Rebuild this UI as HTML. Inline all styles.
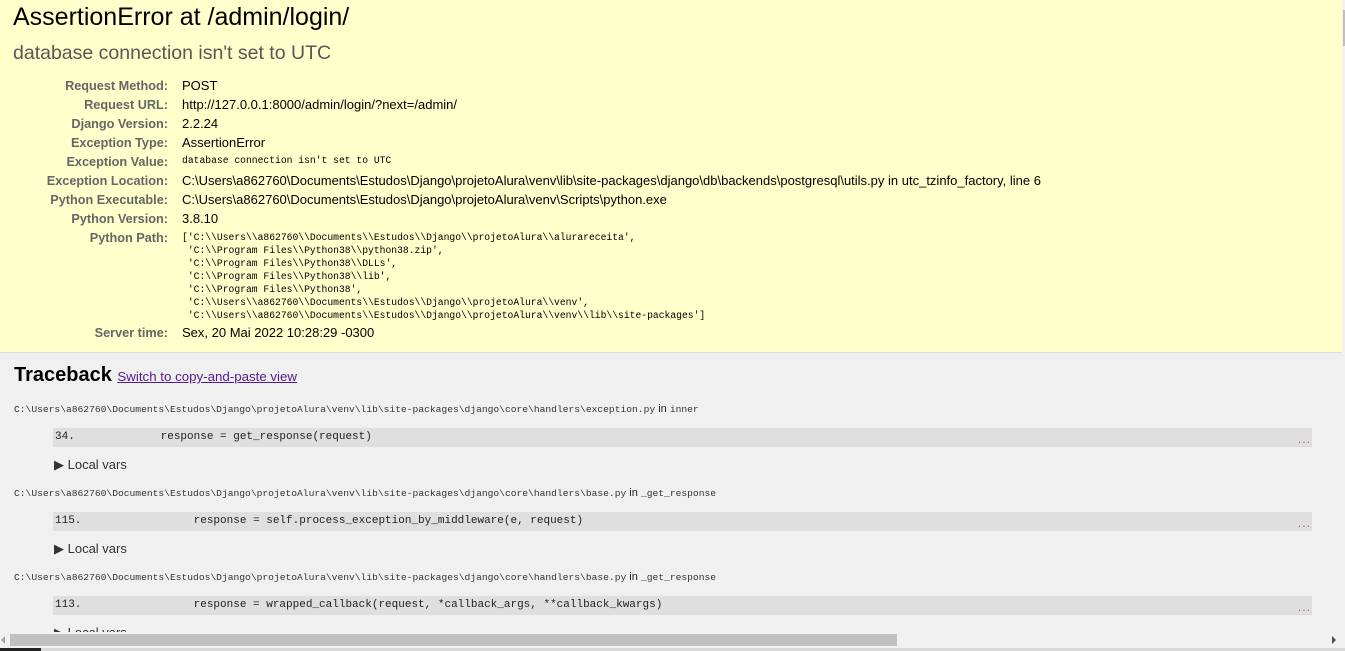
<!DOCTYPE html>
<html><head><meta charset="utf-8"><style>
*{margin:0;padding:0;box-sizing:border-box}
body{width:1345px;height:651px;overflow:hidden;position:relative;background:#f0f0f0;font-family:"Liberation Sans",Arial,sans-serif;color:#000}
#summary{position:absolute;left:0;top:0;width:1342px;height:353px;background:#ffffcc;border-bottom:1px solid #ddd}
.a{position:absolute;white-space:pre}
h1{position:absolute;left:13px;top:3px;font-size:25px;font-weight:normal;white-space:nowrap}
h2.sub{position:absolute;left:13px;top:42px;font-size:19.5px;font-weight:normal;color:#575757;white-space:nowrap}
.lab{position:absolute;right:1174px;font-size:12.7px;font-weight:bold;color:#666;white-space:nowrap;text-align:right;margin-top:1px}
.val{position:absolute;left:182px;font-size:13px;white-space:nowrap}
.mono{font-family:"Liberation Mono",monospace;font-size:9.7px}
.fn{position:absolute;left:14px;font-size:11px;color:#222;white-space:nowrap}
.fn .m{font-family:"Liberation Mono",monospace;font-size:9.65px;color:#333}
.code{position:absolute;left:53px;width:1259px;height:19px;background:#dfdfdf;font-family:"Liberation Mono",monospace;font-size:11px;color:#222;line-height:19px;white-space:pre;padding-left:2px}
.code .d{position:absolute;right:2px;top:4px;color:#a55;font-size:9px;letter-spacing:-1px}
.lv{position:absolute;left:54px;font-size:13px;color:#333;white-space:nowrap}
</style></head><body>
<div id="summary">
<h1>AssertionError at /admin/login/</h1>
<h2 class="sub">database connection isn't set to UTC</h2>
<div class="lab" style="top:78px">Request Method:</div><div class="val" style="top:78px">POST</div>
<div class="lab" style="top:97px">Request URL:</div><div class="val" style="top:97px">http://127.0.0.1:8000/admin/login/?next=/admin/</div>
<div class="lab" style="top:116px">Django Version:</div><div class="val" style="top:116px">2.2.24</div>
<div class="lab" style="top:135px">Exception Type:</div><div class="val" style="top:135px">AssertionError</div>
<div class="lab" style="top:154px">Exception Value:</div><div class="val mono" style="top:155px">database connection isn't set to UTC</div>
<div class="lab" style="top:173px">Exception Location:</div><div class="val" style="top:173px">C:\Users\a862760\Documents\Estudos\Django\projetoAlura\venv\lib\site-packages\django\db\backends\postgresql\utils.py in utc_tzinfo_factory, line 6</div>
<div class="lab" style="top:192px">Python Executable:</div><div class="val" style="top:192px">C:\Users\a862760\Documents\Estudos\Django\projetoAlura\venv\Scripts\python.exe</div>
<div class="lab" style="top:211px">Python Version:</div><div class="val" style="top:211px">3.8.10</div>
<div class="lab" style="top:230px">Python Path:</div>
<div class="val mono" style="top:231px;line-height:13px;white-space:pre">['C:\\Users\\a862760\\Documents\\Estudos\\Django\\projetoAlura\\alurareceita',
 'C:\\Program Files\\Python38\\python38.zip',
 'C:\\Program Files\\Python38\\DLLs',
 'C:\\Program Files\\Python38\\lib',
 'C:\\Program Files\\Python38',
 'C:\\Users\\a862760\\Documents\\Estudos\\Django\\projetoAlura\\venv',
 'C:\\Users\\a862760\\Documents\\Estudos\\Django\\projetoAlura\\venv\\lib\\site-packages']</div>
<div class="lab" style="top:325px">Server time:</div><div class="val" style="top:325px">Sex, 20 Mai 2022 10:28:29 -0300</div>
</div>
<div class="a" style="left:14px;top:364px;font-size:20px;font-weight:bold">Traceback <a style="font-size:13.3px;font-weight:normal;color:#551a8b;text-decoration:underline">Switch to copy-and-paste view</a></div>

<div class="fn" style="top:403px"><span class="m">C:\Users\a862760\Documents\Estudos\Django\projetoAlura\venv\lib\site-packages\django\core\handlers\exception.py</span> in <span class="m">inner</span></div>
<div class="code" style="top:428px">34.             response = get_response(request)<span class="d">...</span></div>
<div class="lv" style="top:457px">▶ Local vars</div>

<div class="fn" style="top:487px"><span class="m">C:\Users\a862760\Documents\Estudos\Django\projetoAlura\venv\lib\site-packages\django\core\handlers\base.py</span> in <span class="m">_get_response</span></div>
<div class="code" style="top:512px">115.                 response = self.process_exception_by_middleware(e, request)<span class="d">...</span></div>
<div class="lv" style="top:541px">▶ Local vars</div>

<div class="fn" style="top:571px"><span class="m">C:\Users\a862760\Documents\Estudos\Django\projetoAlura\venv\lib\site-packages\django\core\handlers\base.py</span> in <span class="m">_get_response</span></div>
<div class="code" style="top:596px">113.                 response = wrapped_callback(request, *callback_args, **callback_kwargs)<span class="d">...</span></div>
<div class="lv" style="top:625px">▶ Local vars</div>

<div style="position:absolute;left:1342px;top:0;width:3px;height:632px;background:#f1f1f1"></div>
<div style="position:absolute;left:1343px;top:10px;width:2px;height:36px;background:#c1c1c1"></div>
<div style="position:absolute;left:0;top:632px;width:1345px;height:16px;background:#f1f1f1"></div>
<div style="position:absolute;left:10px;top:634px;width:887px;height:12px;background:#c1c1c1"></div>
<div style="position:absolute;left:1px;top:636px;width:0;height:0;border-top:4px solid transparent;border-bottom:4px solid transparent;border-right:4px solid #a3a3a3"></div>
<div style="position:absolute;left:1332px;top:636px;width:0;height:0;border-top:4px solid transparent;border-bottom:4px solid transparent;border-left:4px solid #505050"></div>
<div style="position:absolute;left:0;top:648px;width:1345px;height:3px;background:#d9d9d9"></div>
<div style="position:absolute;left:0;top:648px;width:41px;height:3px;background:#222"></div>
</body></html>
